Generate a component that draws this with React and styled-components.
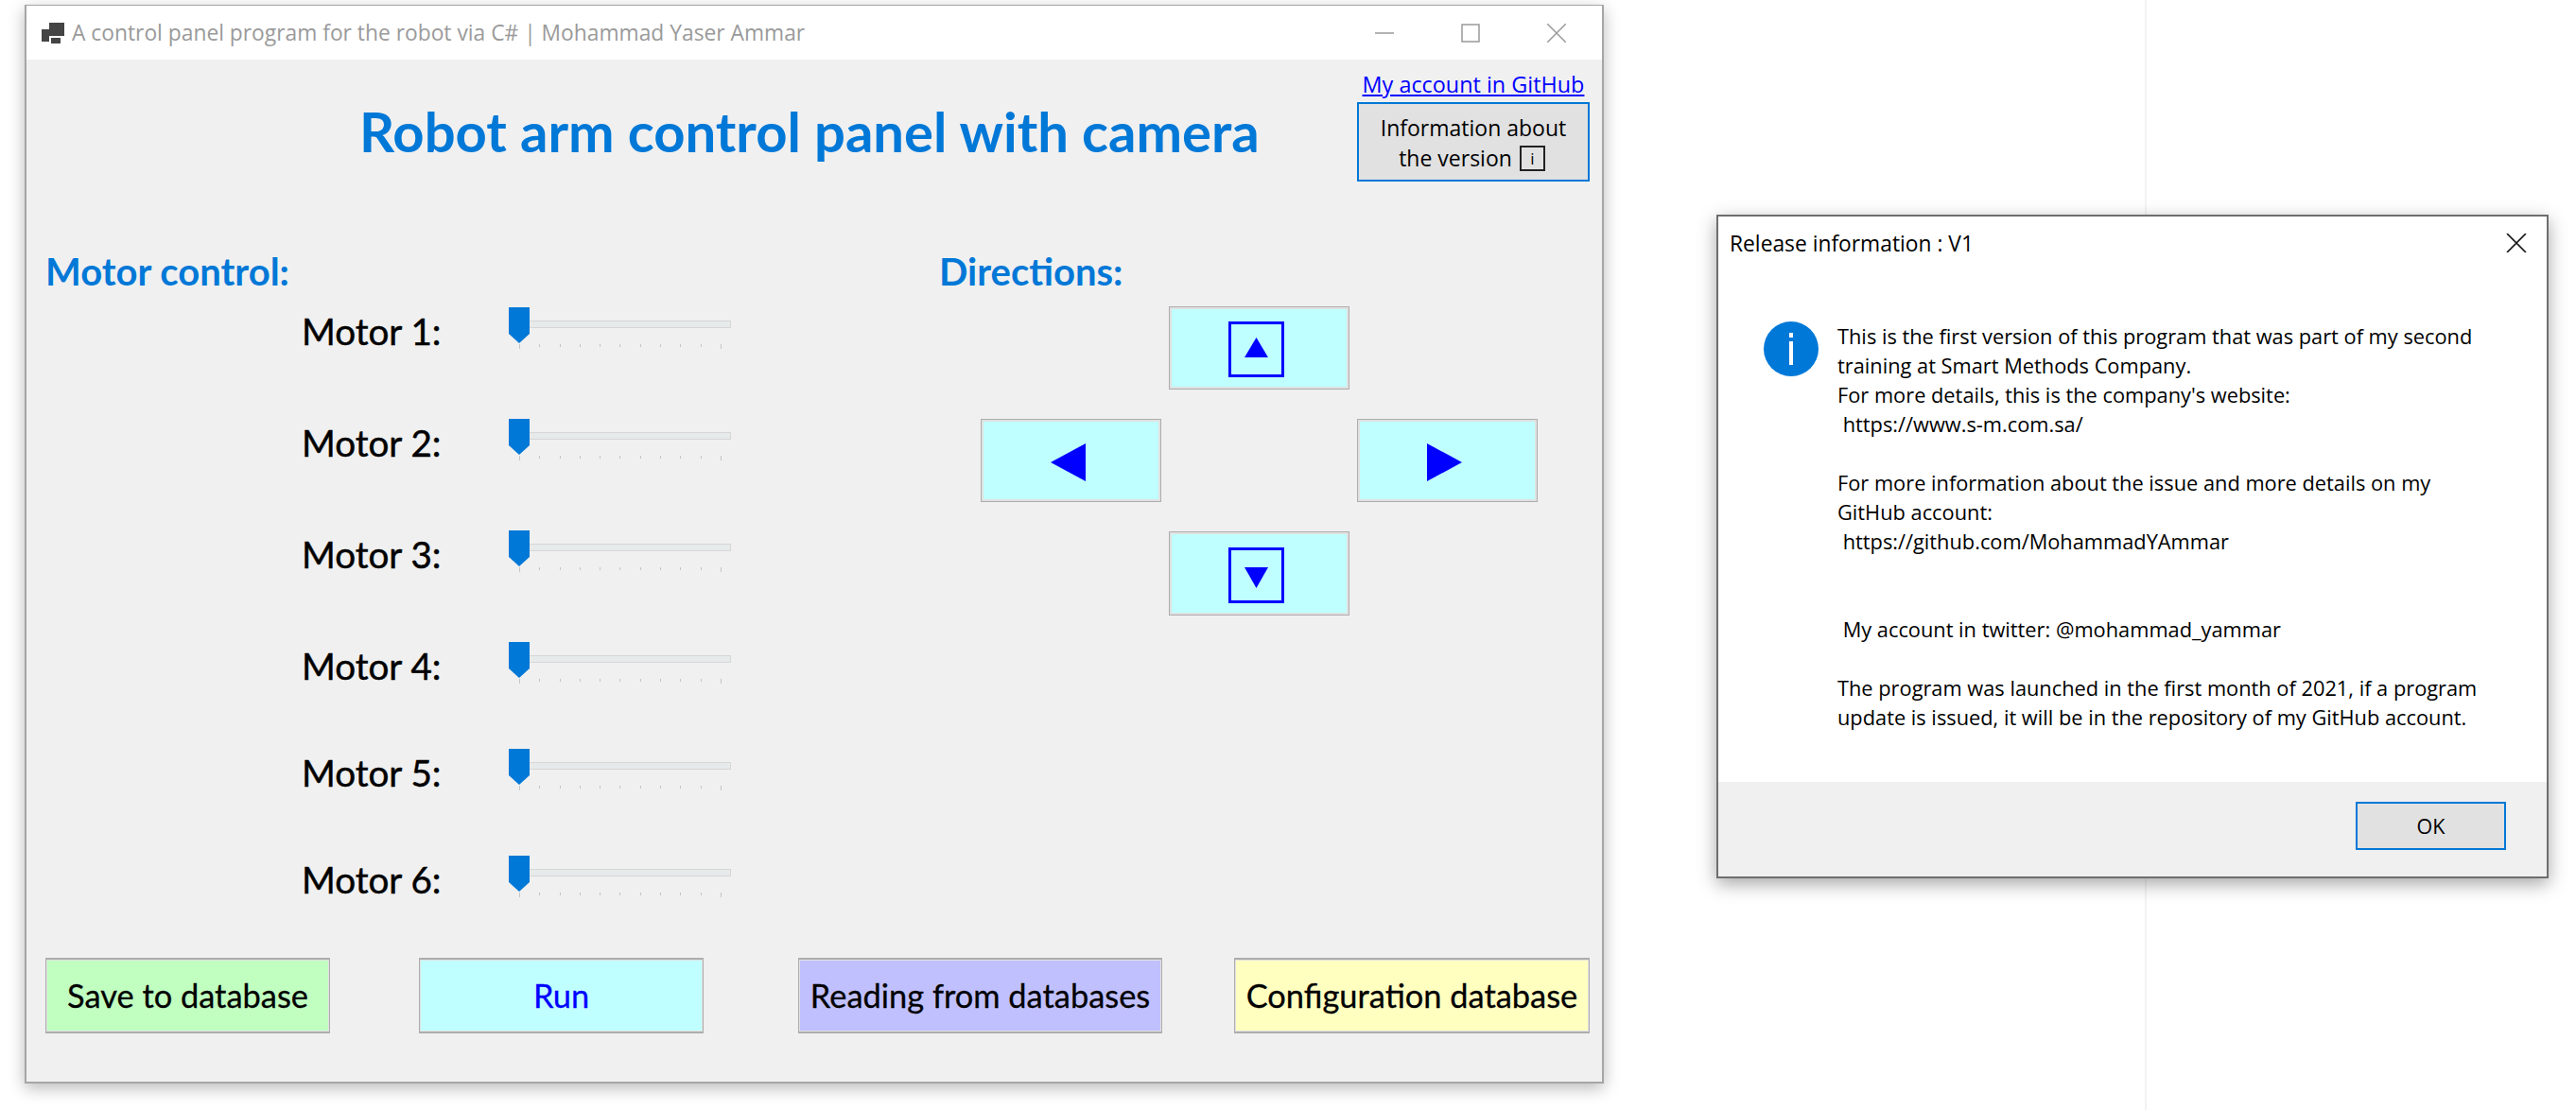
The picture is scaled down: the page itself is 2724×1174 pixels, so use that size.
import React from "react";
import styled, { createGlobalStyle } from "styled-components";

const uiFont = '"Open Sans", "Noto Sans", sans-serif';
const headFont = '"Lato", "Open Sans", sans-serif';

const GlobalStyle = createGlobalStyle`
  html, body {
    margin: 0;
    padding: 0;
    background: #fff;
  }
  * { box-sizing: border-box; }
`;

const Page = styled.div`
  width: 2724px;
  height: 1174px;
  overflow: hidden;
  display: flex;
  align-items: flex-start;
  padding: 5px 0 0 26px;
  background: linear-gradient(#f3f3f3, #f3f3f3) 2268px 0 / 2px 100% no-repeat #fff;
  font-family: ${uiFont};
`;

const AppWindow = styled.div`
  width: 1670px;
  height: 1141px;
  display: flex;
  flex-direction: column;
  flex: none;
  border: 2px solid #a6a6a6;
  border-top-width: 1px;
  box-shadow: 0 5px 16px rgba(0, 0, 0, 0.28);
  background: #f0f0f0;
`;

const TitleBar = styled.div`
  height: 57px;
  flex: none;
  background: #fff;
  display: flex;
  align-items: center;
  padding-left: 16px;
`;

const TitleText = styled.span`
  margin-left: 7px;
  font-size: 22.8px;
  color: #9a9a9a;
`;

const WindowButtons = styled.div`
  margin-left: auto;
  display: flex;
  align-items: center;
  gap: 71px;
  padding-right: 38px;
`;

const Header = styled.header`
  height: 201px;
  flex: none;
  display: flex;
  align-items: flex-start;
  padding: 11px 13px 0 352px;
`;

const Title = styled.h1`
  margin: 30px 0 0;
  font-family: ${headFont};
  font-size: 58px;
  line-height: 70px;
  font-weight: 700;
  color: #0078d7;
  white-space: nowrap;
`;

const HeaderSide = styled.div`
  margin-left: auto;
  display: flex;
  flex-direction: column;
  align-items: center;
`;

const GitLink = styled.a`
  font-size: 23.4px;
  line-height: 30px;
  color: #0000ff;
  text-decoration: underline;
  white-space: nowrap;
`;

const InfoButton = styled.div`
  width: 246px;
  height: 84px;
  margin-top: 4px;
  padding-top: 2px;
  border: 2px solid #0078d7;
  background: #e1e1e1;
  color: #000;
  font-size: 23px;
  line-height: 32px;
  display: flex;
  flex-direction: column;
  align-items: center;
  justify-content: center;
`;

const InfoLine = styled.div`
  display: flex;
  align-items: center;
  gap: 8px;
  margin-right: 3px;
`;

const InfoGlyph = styled.span`
  width: 27px;
  height: 27px;
  border: 2px solid #222;
  display: flex;
  align-items: center;
  justify-content: center;
  font-size: 17px;
  line-height: 1;
`;

const Content = styled.main`
  height: 749px;
  flex: none;
  display: grid;
  grid-template-columns: 945px 1fr;
  padding-left: 20px;
`;

const SectionHead = styled.h2`
  margin: 0;
  height: 46px;
  font-family: ${headFont};
  font-size: 40px;
  line-height: 46px;
  font-weight: 700;
  color: #0078d7;
  white-space: nowrap;
`;

const MotorList = styled.div`
  margin-top: 15px;
  padding-left: 271px;
`;

const MotorRow = styled.div`
  display: flex;
  align-items: flex-start;
  height: 46px;
  margin-top: ${(p) => p.$top}px;
`;

const MotorLabel = styled.span`
  width: 219px;
  flex: none;
  margin-top: 2px;
  font-family: ${headFont};
  font-size: 38.6px;
  line-height: 46px;
  color: #000;
  -webkit-text-stroke: 0.5px #000;
`;

const Slider = styled.div`
  position: relative;
  width: 235px;
`;

const Thumb = styled.svg`
  position: absolute;
  left: 0;
  top: 0;
`;

const Track = styled.div`
  height: 8px;
  margin-top: 14px;
  background: #e7eaea;
  border: 1px solid #d6d6d6;
`;

const Ticks = styled.div`
  width: 214px;
  margin: 17px 0 0 11px;
  display: flex;
  justify-content: space-between;
  align-items: flex-start;
`;

const Tick = styled.i`
  width: 1px;
  height: ${(p) => (p.$long ? 5 : 3)}px;
  background: #c4c4c4;
`;

const DirectionGrid = styled.div`
  display: grid;
  grid-template-columns: repeat(3, 191px);
  grid-template-rows: 88px 88px 89px;
  column-gap: 8px;
  row-gap: 31px;
  margin: 14px 0 0 44px;
`;

const DirectionButton = styled.div`
  grid-column: ${(p) => p.$col};
  grid-row: ${(p) => p.$row};
  background: #bfffff;
  border: 1px solid #adadad;
  box-shadow: inset 0 0 0 2px #e1e1e1;
  display: flex;
  align-items: center;
  justify-content: center;
  padding: 3px 6px 0 0;
`;

const Footer = styled.footer`
  display: flex;
  padding-left: 20px;
`;

const ActionButton = styled.div`
  width: ${(p) => p.$w}px;
  height: 80px;
  margin-left: ${(p) => p.$gap || 0}px;
  background: ${(p) => p.$bg};
  color: ${(p) => p.$color || "#000"};
  border: 1px solid #adadad;
  border-top-width: 2px;
  border-bottom-width: 2px;
  box-shadow: inset 0 0 0 1px #e1e1e1;
  display: flex;
  align-items: center;
  justify-content: center;
  font-family: ${headFont};
  font-size: 34.4px;
  padding-bottom: 2px;
  white-space: nowrap;
  -webkit-text-stroke: 0.3px ${(p) => p.$color || "#000"};
`;

const Dialog = styled.div`
  width: 880px;
  height: 702px;
  margin: 222px 0 0 119px;
  flex: none;
  display: flex;
  flex-direction: column;
  border: 2px solid #6e6e6e;
  background: #fff;
  box-shadow: 0 6px 18px rgba(0, 0, 0, 0.35);
`;

const DialogHead = styled.div`
  height: 56px;
  flex: none;
  display: flex;
  align-items: center;
  justify-content: space-between;
  padding: 0 21px 0 12px;
  font-size: 22.8px;
  color: #000;
`;

const DialogBody = styled.div`
  flex: 1;
  display: flex;
  align-items: flex-start;
  gap: 20px;
  padding: 55px 0 0 48px;
`;

const Message = styled.div`
  font-size: 21.8px;
  line-height: 31px;
  color: #000;
  white-space: pre;
`;

const DialogFooter = styled.div`
  height: 100px;
  flex: none;
  display: flex;
  justify-content: flex-end;
  align-items: flex-start;
  padding: 21px 43px 0 0;
  background: #f0f0f0;
`;

const OkButton = styled.div`
  width: 159px;
  height: 51px;
  border: 2px solid #0078d7;
  background: #e1e1e1;
  display: flex;
  align-items: center;
  justify-content: center;
  font-size: 21.5px;
  color: #000;
`;

const messageText = `This is the first version of this program that was part of my second
training at Smart Methods Company.
For more details, this is the company's website:
 https://www.s-m.com.sa/

For more information about the issue and more details on my
GitHub account:
 https://github.com/MohammadYAmmar


 My account in twitter: @mohammad_yammar

The program was launched in the first month of 2021, if a program
update is issued, it will be in the repository of my GitHub account.`;

const motors = [
  { name: "Motor 1:", top: 0 },
  { name: "Motor 2:", top: 72 },
  { name: "Motor 3:", top: 72 },
  { name: "Motor 4:", top: 72 },
  { name: "Motor 5:", top: 67 },
  { name: "Motor 6:", top: 67 },
];

const actions = [
  { label: "Save to database", w: 301, bg: "#c0ffc0" },
  { label: "Run", w: 301, gap: 94, bg: "#c0ffff", color: "#0000ff" },
  { label: "Reading from databases", w: 385, gap: 100, bg: "#c0c0ff" },
  { label: "Configuration database", w: 376, gap: 76, bg: "#ffffc0" },
];

function AppIcon() {
  return (
    <svg width="25" height="24" viewBox="0 0 25 24" fill="#444">
      <rect x="8" y="1" width="16" height="14" />
      <rect x="0" y="8" width="8" height="13" />
      <rect x="10" y="17" width="10" height="6" />
    </svg>
  );
}

function BoxedTriangle({ down }) {
  return (
    <svg width="59" height="59" viewBox="0 0 59 59">
      <rect x="1.5" y="1.5" width="56" height="56" fill="none" stroke="#0000ff" strokeWidth="3" />
      <polygon points={down ? "17,21 42,21 29.5,43" : "29.5,17 42,38 17,38"} fill="#0000ff" />
    </svg>
  );
}

function SideTriangle({ left }) {
  return (
    <svg width="37" height="40" viewBox="0 0 37 40">
      <polygon points={left ? "37,0 37,40 0,20" : "0,0 0,40 37,20"} fill="#0000ff" />
    </svg>
  );
}

function MotorSlider() {
  return (
    <Slider>
      <Track />
      <Ticks>
        {Array.from({ length: 11 }, (_, i) => (
          <Tick key={i} $long={i === 0 || i === 10} />
        ))}
      </Ticks>
      <Thumb width="22" height="38" viewBox="0 0 22 38">
        <polygon points="0,0 22,0 22,28 11,38 0,28" fill="#0078d7" />
      </Thumb>
    </Slider>
  );
}

export default function App() {
  return (
    <Page>
      <GlobalStyle />
      <AppWindow>
        <TitleBar>
          <AppIcon />
          <TitleText>A control panel program for the robot via C# | Mohammad Yaser Ammar</TitleText>
          <WindowButtons>
            <svg width="20" height="20" viewBox="0 0 20 20">
              <line x1="0" y1="10" x2="20" y2="10" stroke="#9a9a9a" strokeWidth="1.5" />
            </svg>
            <svg width="20" height="20" viewBox="0 0 20 20">
              <rect x="1" y="1" width="18" height="18" fill="none" stroke="#9a9a9a" strokeWidth="1.5" />
            </svg>
            <svg width="20" height="20" viewBox="0 0 20 20">
              <path d="M0 0 L20 20 M20 0 L0 20" stroke="#9a9a9a" strokeWidth="1.5" />
            </svg>
          </WindowButtons>
        </TitleBar>
        <Header>
          <Title>Robot arm control panel with camera</Title>
          <HeaderSide>
            <GitLink href="#">My account in GitHub</GitLink>
            <InfoButton>
              <span>Information about</span>
              <InfoLine>
                <span>the version</span>
                <InfoGlyph>i</InfoGlyph>
              </InfoLine>
            </InfoButton>
          </HeaderSide>
        </Header>
        <Content>
          <section>
            <SectionHead>Motor control:</SectionHead>
            <MotorList>
              {motors.map((m) => (
                <MotorRow key={m.name} $top={m.top}>
                  <MotorLabel>{m.name}</MotorLabel>
                  <MotorSlider />
                </MotorRow>
              ))}
            </MotorList>
          </section>
          <section>
            <SectionHead>Directions:</SectionHead>
            <DirectionGrid>
              <DirectionButton $col={2} $row={1}>
                <BoxedTriangle />
              </DirectionButton>
              <DirectionButton $col={1} $row={2}>
                <SideTriangle left />
              </DirectionButton>
              <DirectionButton $col={3} $row={2}>
                <SideTriangle />
              </DirectionButton>
              <DirectionButton $col={2} $row={3}>
                <BoxedTriangle down />
              </DirectionButton>
            </DirectionGrid>
          </section>
        </Content>
        <Footer>
          {actions.map((a) => (
            <ActionButton key={a.label} $w={a.w} $gap={a.gap} $bg={a.bg} $color={a.color}>
              {a.label}
            </ActionButton>
          ))}
        </Footer>
      </AppWindow>
      <Dialog>
        <DialogHead>
          <span>Release information : V1</span>
          <svg width="22" height="20" viewBox="0 0 22 20">
            <path d="M1 0 L21 20 M21 0 L1 20" stroke="#111" strokeWidth="1.6" />
          </svg>
        </DialogHead>
        <DialogBody>
          <svg width="58" height="58" viewBox="0 0 58 58" style={{ flex: "none" }}>
            <circle cx="29" cy="29" r="29" fill="#0078d7" />
            <rect x="27" y="12" width="4" height="5" fill="#fff" />
            <rect x="27" y="21" width="4" height="25" fill="#fff" />
          </svg>
          <Message>{messageText}</Message>
        </DialogBody>
        <DialogFooter>
          <OkButton>OK</OkButton>
        </DialogFooter>
      </Dialog>
    </Page>
  );
}
